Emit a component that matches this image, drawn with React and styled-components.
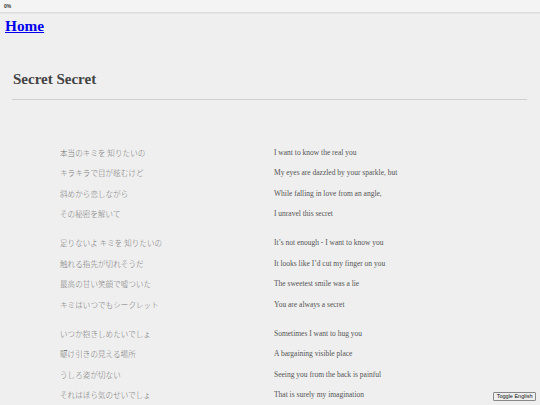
import React, { useState } from "react";
import styled, { createGlobalStyle } from "styled-components";

const Global = createGlobalStyle`
  html, body { margin: 0; padding: 0; background: #efefef; }
  body { font-family: "Liberation Serif", "Times New Roman", serif; }
`;

const TopBar = styled.div`
  height: 12px;
  background: #f4f4f4;
  border-bottom: 1px solid #dcdcdc;
  box-shadow: 0 1px 1px rgba(0,0,0,0.04);
  display: flex;
  align-items: center;
  padding-left: 4px;
  font-family: "Liberation Sans", Arial, sans-serif;
  font-size: 5px;
  font-weight: bold;
  color: #333;
`;

const HomeTitle = styled.h1`
  margin: 4.5px 0 0 5px;
  font-size: 15.3px;
  line-height: 15px;
  font-weight: bold;
  a { color: #0000ee; text-decoration: underline; }
`;

const Main = styled.main`
  padding: 0 12px;
`;

const SongTitle = styled.h2`
  margin: 39px 0 0 1px;
  font-size: 15px;
  line-height: 15px;
  font-weight: bold;
  color: #444;
`;

const Rule = styled.hr`
  margin: 12.5px 0 0 0;
  border: 0;
  border-top: 1px solid #cfcfcf;
  width: 515px;
`;

const Lyrics = styled.div`
  margin-top: 42.5px;
  padding-left: 48px;
`;

const Stanza = styled.div`
  margin-bottom: 8.5px;
`;

const Line = styled.div`
  display: grid;
  grid-template-columns: 214px 1fr;
  height: 20.5px;
  line-height: 20.5px;
  font-size: 7.5px;
`;

const Jp = styled.span`
  font-family: "Noto Sans CJK JP", sans-serif;
  font-weight: 300;
  color: #777;
  letter-spacing: 0.1px;
`;

const En = styled.span`
  font-family: "Liberation Serif", "Times New Roman", serif;
  color: #555;
`;

const ToggleButton = styled.button`
  position: fixed;
  right: 4px;
  bottom: 4px;
  height: 9.5px;
  padding: 0 2.5px;
  font-family: "Liberation Sans", Arial, sans-serif;
  font-size: 5.5px;
  line-height: 7px;
  color: #111;
  background: #efefef;
  border: 0.7px solid #888;
  border-radius: 1px;
`;

const stanzas = [
  [
    ["本当のキミを 知りたいの", "I want to know the real you"],
    ["キラキラで目が眩むけど", "My eyes are dazzled by your sparkle, but"],
    ["斜めから恋しながら", "While falling in love from an angle,"],
    ["その秘密を解いて", "I unravel this secret"],
  ],
  [
    ["足りないよ キミを 知りたいの", "It’s not enough - I want to know you"],
    ["触れる指先が切れそうだ", "It looks like I’d cut my finger on you"],
    ["最高の甘い笑顔で嘘ついた", "The sweetest smile was a lie"],
    ["キミはいつでもシークレット", "You are always a secret"],
  ],
  [
    ["いつか抱きしめたいでしょ", "Sometimes I want to hug you"],
    ["駆け引きの見える場所", "A bargaining visible place"],
    ["うしろ姿が切ない", "Seeing you from the back is painful"],
    ["それはほら気のせいでしょ", "That is surely my imagination"],
  ],
];

export default function App() {
  const [showEn, setShowEn] = useState(true);
  return (
    <>
      <Global />
      <TopBar>0%</TopBar>
      <HomeTitle>
        <a href="#">Home</a>
      </HomeTitle>
      <Main>
        <SongTitle>Secret Secret</SongTitle>
        <Rule />
        <Lyrics>
          {stanzas.map((s, i) => (
            <Stanza key={i}>
              {s.map(([jp, en], j) => (
                <Line key={j}>
                  <Jp>{jp}</Jp>
                  <En>{showEn ? en : ""}</En>
                </Line>
              ))}
            </Stanza>
          ))}
        </Lyrics>
      </Main>
      <ToggleButton onClick={() => setShowEn((v) => !v)}>Toggle English</ToggleButton>
    </>
  );
}
